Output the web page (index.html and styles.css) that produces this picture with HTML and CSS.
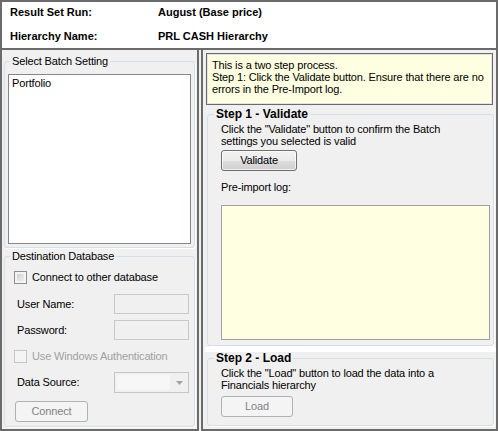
FILE: index.html
```html
<!DOCTYPE html>
<html>
<head>
<meta charset="utf-8">
<title>Batch Import</title>
<link rel="stylesheet" href="styles.css">
</head>
<body>
<div class="window">
  <div class="header">
    <div class="hlabel">Result Set Run:</div><div class="hvalue">August (Base price)</div>
    <div class="hlabel">Hierarchy Name:</div><div class="hvalue">PRL CASH Hierarchy</div>
  </div>
  <div class="panels">
    <div class="left">
      <fieldset class="group batch">
        <legend>Select Batch Setting</legend>
        <div class="listbox"><div class="item">Portfolio</div></div>
      </fieldset>
      <fieldset class="group dest">
        <legend>Destination Database</legend>
        <div class="check-row first"><span class="checkbox"></span><span>Connect to other database</span></div>
        <div class="field-row user"><span class="flabel">User Name:</span><span class="textbox"></span></div>
        <div class="field-row pass"><span class="flabel">Password:</span><span class="textbox"></span></div>
        <div class="check-row disabled win"><span class="checkbox"></span><span>Use Windows Authentication</span></div>
        <div class="field-row ds"><span class="flabel">Data Source:</span><span class="combo"><span class="combo-text"></span><svg class="arrow" width="7" height="4" viewBox="0 0 7 4"><path d="M0 0H7L3.5 4Z" fill="#a3a3a3"/></svg></span></div>
        <div class="button disabled connect">Connect</div>
      </fieldset>
    </div>
    <div class="right">
      <div class="info">This is a two step process.<br>Step 1: Click the Validate button. Ensure that there are no<br>errors in the Pre-Import log.</div>
      <fieldset class="group step step1">
        <legend>Step 1 - Validate</legend>
        <div class="step-body">
          <div class="desc">Click the "Validate" button to confirm the Batch<br>settings you selected is valid</div>
          <div class="button validate">Validate</div>
          <div class="loglabel">Pre-import log:</div>
          <div class="log"></div>
        </div>
      </fieldset>
      <div class="band"></div>
      <fieldset class="group step step2">
        <legend>Step 2 - Load</legend>
        <div class="step-body">
          <div class="desc">Click the "Load" button to load the data into a<br>Financials hierarchy</div>
          <div class="button disabled load">Load</div>
        </div>
      </fieldset>
    </div>
  </div>
</div>
</body>
</html>
```
FILE: styles.css
```css
* { box-sizing: border-box; }
html, body { margin: 0; padding: 0; }
body {
  background: #f0f0f0;
  font-family: "Liberation Sans", Arial, sans-serif;
  font-size: 11px;
  color: #000;
}
.window {
  width: 498px;
  height: 431px;
  background: #f0f0f0;
  display: flex;
  flex-direction: column;
}
.header {
  height: 50px;
  background: #fff;
  border: 2px solid #6b6b6b;
  display: grid;
  grid-template-columns: 148px auto;
  row-gap: 11px;
  padding: 4px 0 0 8px;
  align-content: start;
  font-weight: bold;
  line-height: 13px;
}
.panels {
  height: 381px;
  display: flex;
  gap: 2px;
  letter-spacing: -0.15px;
}
.left {
  width: 199px;
  border: 2px solid #6b6b6b;
  border-top: none;
  display: flex;
  flex-direction: column;
}
.right {
  flex: 1;
  border: 2px solid #6b6b6b;
  border-top: none;
  display: flex;
  flex-direction: column;
}
.group {
  margin: 0;
  min-width: 0;
  border: 1px solid #d5dfe5;
  border-radius: 3px;
  box-shadow: 1px 1px 0 #fff;
}
.group legend {
  padding: 0 2px;
  line-height: 12px;
  font-size: 11px;
}
.batch {
  margin: 5px 2px 0 2px;
  padding: 0 3px 3px 3px;
}
.batch legend, .dest legend { margin-left: 2px; }
.listbox {
  margin-top: 7px;
  height: 170px;
  background: #fff;
  border: 1px solid #828790;
  padding: 2px 0 0 3px;
  line-height: 13px;
}
.dest {
  margin: 2px 2px 2px 2px;
  padding: 0 3px 4px 3px;
  flex: 1;
}
.check-row {
  display: flex;
  align-items: center;
  height: 14px;
  margin-left: 6px;
  gap: 5px;
  line-height: 13px;
}
.check-row.first { margin-top: 8px; }
.check-row.win { margin-top: 9px; }
.checkbox {
  width: 13px;
  height: 13px;
  border: 1px solid #8e8f8f;
  background: linear-gradient(135deg, #c9c9c9 0%, #e6e6e6 60%, #f2f2f2 100%);
  box-shadow: inset 0 0 0 2px #f4f4f4;
}
.check-row.disabled { color: #a0a0a0; }
.check-row.disabled .checkbox {
  border-color: #c6c6c6;
  background: #f4f4f4;
  box-shadow: none;
}
.field-row {
  display: grid;
  grid-template-columns: 97px 75px;
  align-items: center;
  margin-left: 9px;
  line-height: 13px;
}
.field-row.user { margin-top: 10px; height: 20px; }
.field-row.pass { margin-top: 6px; height: 20px; }
.field-row.ds { margin-top: 9px; height: 21px; }
.textbox {
  height: 20px;
  border: 1px solid #c9c9c9;
  background: #f0f0f0;
}
.combo {
  height: 21px;
  border: 1px solid #c5c5c5;
  background: #f0f0f0;
  display: flex;
  align-items: center;
  padding: 0 5px 0 2px;
  justify-content: space-between;
}
.combo-text {
  width: 53px;
  height: 15px;
  background: #f7f7f7;
}
.button {
  height: 21px;
  border: 1px solid #707070;
  border-radius: 3px;
  background: linear-gradient(#f2f2f2 0%, #ebebeb 50%, #dddddd 51%, #cfcfcf 100%);
  box-shadow: inset 0 0 0 1px rgba(255,255,255,0.7);
  display: flex;
  align-items: center;
  justify-content: center;
  line-height: 13px;
}
.button.disabled {
  border-color: #adb2b5;
  background: #f4f4f4;
  box-shadow: none;
  color: #838383;
}
.connect { width: 73px; margin: 8px 0 0 7px; }
.info {
  margin: 3px 3px 0 3px;
  height: 52px;
  border: 1px solid #6b6b6b;
  box-shadow: inset 0 0 0 1px #e3e3e3;
  background: #ffffe1;
  padding: 5px 0 0 5px;
  line-height: 12px;
  white-space: nowrap;
}
.step {
  margin: 3px 2px 0 4px;
  padding: 0 2px 0 6px;
}
.step legend {
  font-size: 12px;
  font-weight: bold;
  letter-spacing: 0;
}
.step-body { padding-left: 7px; }
.step1 { padding-bottom: 5px; }
.step2 { margin-top: 0; padding-bottom: 8px; }
.desc {
  margin-top: 3px;
  line-height: 12px;
  white-space: nowrap;
}
.validate { width: 76px; margin-top: 3px; }
.loglabel { margin-top: 10px; line-height: 12px; }
.log {
  margin-top: 12px;
  width: 269px;
  height: 135px;
  border: 1px solid #a0a0a0;
  background: #ffffe1;
}
.band {
  margin: 1px 0 0 2px;
  height: 5px;
  background: #fff;
}
.load { width: 72px; margin-top: 5px; }
```
